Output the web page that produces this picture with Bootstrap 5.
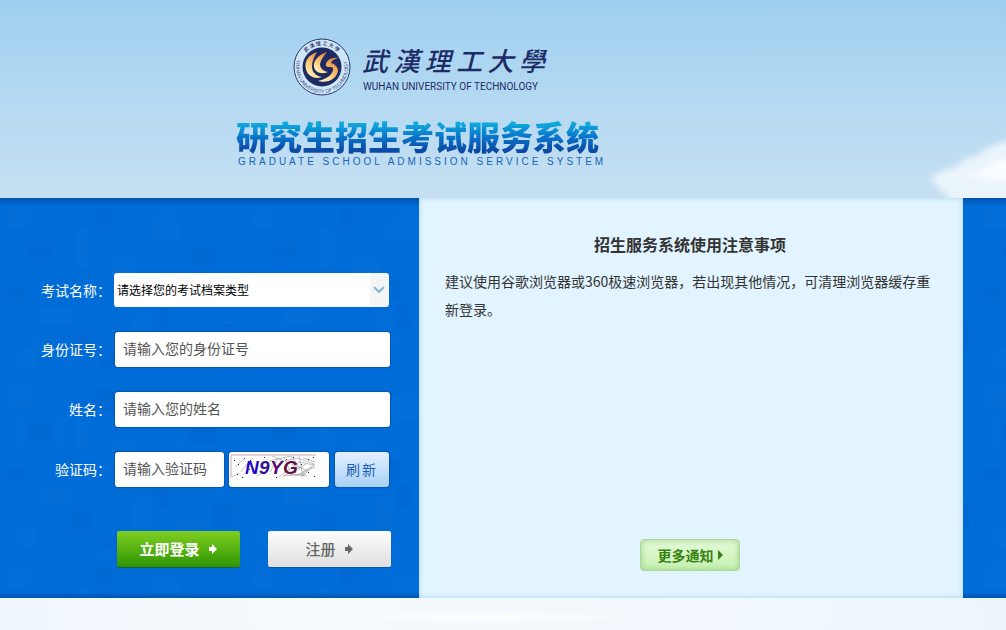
<!DOCTYPE html>
<html lang="zh-CN">
<head>
<meta charset="utf-8">
<meta name="viewport" content="width=device-width, initial-scale=1">
<title>研究生招生考试服务系统</title>
<link href="https://cdn.jsdelivr.net/npm/bootstrap@5.3.0/dist/css/bootstrap.min.css" rel="stylesheet">
<style>
body{font-family:"Noto Sans CJK SC",sans-serif;font-size:14px;background:#f1f7fd;color:#333}
.sky{background:linear-gradient(#9fcfef,#b4d9f2 50%,#c6e0f2);padding:37px 0 30px 236px;overflow:hidden}
.cloud{right:0;bottom:0;width:86px;height:70px}
.brand{padding-left:57px;gap:11px}
.brand-name{color:#1d2b66;width:183px;padding-top:4px}
.brand-cn{font-size:26px;line-height:34px;font-weight:500;font-style:italic}
.brand-en{font-family:Roboto,"Liberation Sans",sans-serif;font-size:10px;line-height:16px;margin-top:2px;white-space:nowrap;padding-left:1px}
.sys-title{font-size:33px;line-height:40px;font-weight:900;margin-top:19px;width:367px;
  background:linear-gradient(#10a8dc 20%,#0a78cc 50%,#0b4ba6 85%);-webkit-background-clip:text;background-clip:text;color:transparent}
.sys-title span{display:block}
.sys-sub{font-family:"Liberation Sans",sans-serif;font-size:10px;line-height:12px;letter-spacing:3px;color:#1765b8;white-space:nowrap;padding-left:2px}
.band{min-height:400px;background-color:#006cd7;background-image:
  linear-gradient(rgba(0,50,120,.45),transparent 8px),linear-gradient(0deg,rgba(0,50,120,.4),transparent 6px),
  url("data:image/svg+xml,%3Csvg xmlns='http://www.w3.org/2000/svg' width='244' height='180'%3E%3Cg fill='%23fff' fill-opacity='.012'%3E%3Cpath d='M8 12h22v18H8zM76 30h14v40H76zM110 64h26v12h-26zM150 20h30v22h-30zM200 80h20v26h-20zM40 110h34v16H40zM132 120h18v30h-18zM176 142h30v12h-30zM18 150h18v20H18z'/%3E%3C/g%3E%3Cg fill='%23003' fill-opacity='.022'%3E%3Cpath d='M28 44h24v20H28zM96 10h18v22H96zM128 82h30v20h-30zM188 50h28v16h-28zM70 132h22v24H70zM2 90h22v14H2zM154 106h14v24h-14zM212 126h26v24h-26zM100 160h34v10h-34z'/%3E%3C/g%3E%3C/svg%3E")}
.login{flex:0 0 419px;padding:76px 29px 30px 0}
.login label{flex:0 0 111px;text-align:right;color:#fff;margin-right:4px}
.rows{gap:25px}
.field{border:0;border-radius:3px;height:35px;font-size:14px;padding:0 8px 3px;color:#555;background-color:#fff;box-shadow:0 0 1px 1px #0058b4}
.field::placeholder{color:#555;opacity:1}
.exam{height:34px;margin:-1px 1px 0 -1px;font-size:12px;color:#000;padding:0 24px 0 3px;appearance:none;box-shadow:none;
  background:url("data:image/svg+xml,%3Csvg xmlns='http://www.w3.org/2000/svg' width='19' height='34'%3E%3Cpath fill='%23f4f5f6' d='M0 0h19v34H0z'/%3E%3Cpath d='M4 14l5 5 5-5' fill='none' stroke='%2384b5da' stroke-width='2'/%3E%3C/svg%3E") no-repeat right center #fff}
.code{width:109px}
.captcha{width:100px;height:35px;border-radius:3px;background:#fff;margin:0 6px 0 5px;box-shadow:0 0 1px 1px #0058b4}
.refresh{width:54px;height:35px;border:0;border-radius:3px;font-size:14px;color:#1c5fb0;padding:0;letter-spacing:2px;background:linear-gradient(#e2f0fd,#a9d1f6);box-shadow:0 0 1px 1px #0058b4}
.actions{padding-left:117px;gap:28px;margin:44px -1px 0 0}
.act{flex:1 1 0;height:36px;border:0;border-radius:2px;font-size:15px;font-weight:700;padding:0;gap:8px}
.act-login{color:#fff;background:linear-gradient(#80cf20,#2f9505);box-shadow:0 1px 1px #14604a}
.act-reg{color:#666;font-weight:500;background:linear-gradient(#fdfdfd,#dfdfe1);box-shadow:0 1px 1px #0058b4}
.notice{background:#e1f4ff;margin-right:43px;padding:32px 28px 27px 26px;box-shadow:inset 0 0 5px #a9d3ef;min-width:0}
.notice h1{font-size:16px;line-height:28px;font-weight:700;margin-bottom:9px}
.notice p{line-height:28px}
.more{width:100px;height:32px;font-size:14px;font-weight:700;color:#388210;border-radius:4px;border:1px solid #acd79b;background:linear-gradient(#e5f9d9,#c6f2b1);box-shadow:inset 0 0 6px #9ad184;gap:4px}
.foot{min-height:32px;background:radial-gradient(ellipse at 48% 60%,#fcfeff,rgba(252,254,255,0) 24%),linear-gradient(90deg,#eff6fc,#f6fafd 30%,#edf5fc)}
</style>
</head>
<body class="d-flex flex-column min-vh-100">
<header class="sky position-relative">
  <svg class="cloud position-absolute" viewBox="0 0 86 70" aria-hidden="true">
    <defs><filter id="soft" x="-30%" y="-30%" width="160%" height="160%"><feGaussianBlur stdDeviation="3"/></filter></defs>
    <path d="M10 50q14-9 28-12 8-10 18-10 12-10 22-12l20-8v70H40q-20-14-30-28z" fill="#eaf4fb" filter="url(#soft)"/>
    <path d="M45 49l18-7 12-8 20-6v25z" fill="#fafdff" filter="url(#soft)"/>
  </svg>
  <div class="brand d-flex align-items-center">
    <svg width="58" height="60" viewBox="-29 -30 58 60" role="img" aria-label="校徽">
      <defs>
        <linearGradient id="fl" x1="0" y1="1" x2=".6" y2="0"><stop stop-color="#fffbe0"/><stop offset=".4" stop-color="#ffd98a"/><stop offset="1" stop-color="#e98a3c"/></linearGradient>
        <path id="lower" d="M-25 -7A26 26 0 1 0 25 -7"/>
        <path id="upper" d="M-18 -12A21.500 21.500 0 0 1 18 -12"/>
      </defs>
      <circle r="28" fill="#cfe6f6" stroke="#26376f"/>
      <circle r="19.500" fill="#1d2b62"/>
      <text font-family="Liberation Sans" font-size="5" fill="#34457d"><textPath href="#lower">WUHAN UNIVERSITY OF TECHNOLOGY</textPath></text>
      <text font-size="5" font-weight="500" fill="#1d2b62"><textPath href="#upper" startOffset="3">武 漢 理 工 大 學</textPath></text>
      <path d="M-5 -15C-14 -12-18 -5-16 2C-15 8-8 13 0 10C-6 9-10 5-10 0C-10-6-8-10-5-15Z" fill="url(#fl)"/>
      <path d="M5 -15C-4 -12-9-6-8 0C-7 5-1 8 6 5C1 4-2 1-2-3C-1-8 2-11 5-15Z" fill="url(#fl)"/>
      <path d="M16 -9C8 -10 3 -5 4 -1C6 1 10 -1 11 1C12 6 6 12 -4 14C6 17 15 11 16 4C16 0 13 -3 9 -4C10 -7 13 -8 16 -9Z" fill="url(#fl)"/>
    </svg>
    <div class="brand-name">
      <div class="brand-cn d-flex justify-content-between"><span>武</span><span>漢</span><span>理</span><span>工</span><span>大</span><span>學</span></div>
      <div class="brand-en">WUHAN UNIVERSITY OF TECHNOLOGY</div>
    </div>
  </div>
  <div class="sys-title">研究生招生考试服务系统</div>
  <div class="sys-sub">GRADUATE SCHOOL ADMISSION SERVICE SYSTEM</div>
</header>

<main class="band d-flex">
  <form class="login" onsubmit="return false">
    <div class="rows d-flex flex-column">
      <div class="d-flex align-items-center">
        <label for="exam">考试名称：</label>
        <select id="exam" class="field exam flex-grow-1"><option>请选择您的考试档案类型</option></select>
      </div>
      <div class="d-flex align-items-center">
        <label for="idno">身份证号：</label>
        <input id="idno" class="field flex-grow-1" type="text" placeholder="请输入您的身份证号">
      </div>
      <div class="d-flex align-items-center">
        <label for="realname">姓名：</label>
        <input id="realname" class="field flex-grow-1" type="text" placeholder="请输入您的姓名">
      </div>
      <div class="d-flex align-items-center">
        <label for="code">验证码：</label>
        <input id="code" class="field code" type="text" placeholder="请输入验证码">
        <svg class="captcha" viewBox="0 0 100 35" role="img" aria-label="验证码">
          <path d="M2 26V3H87" fill="none" stroke="#c9a9b4"/>
          <g fill="none" stroke="#a9a3a9" stroke-width=".7"><path d="M3 25l7-4M7 14l9-8M12 20l7-9M24 6l-7 8M43 4l12 5 13-3 17 6M40 9l22-5 9 12-17 8 22-2M50 25l20-15 15 3-14 9M55 5l7 16 15-9M70 4l4 20 12-12M60 22l18 2M66 24l20-9M41 20l8-14M74 6l12 4M28 24l7-4M62 12l16 6-6 7"/></g>
          <path d="M5 8h1v1h-1zM9 12h1v1h-1zM15 6h1v1h-1zM8 22h1v1h-1zM20 17h1v1h-1zM21 8h1v1h-1zM35 5h1v1h-1zM57 7h1v1h-1zM47 25h1v1h-1zM72 12h1v1h-1zM79 7h1v1h-1zM84 5h1v1h-1zM85 24h1v1h-1zM79 20h1v1h-1zM13 25h1v1h-1zM64 5h1v1h-1z" fill="#223"/>
          <text y="22" font-family="Liberation Sans" font-size="19" font-weight="700" font-style="italic"><tspan x="16" fill="#2608c4">N</tspan><tspan x="30" fill="#321093">9</tspan><tspan x="41" fill="#5c0a71">Y</tspan><tspan x="54" fill="#650d42">G</tspan></text>
        </svg>
        <button class="refresh" type="button">刷新</button>
      </div>
    </div>
    <div class="actions d-flex">
      <button class="act act-login d-flex align-items-center justify-content-center" type="submit">立即登录<svg width="10" height="10" viewBox="0 0 10 10" fill="currentColor" aria-hidden="true"><path d="M1 3h3V0l5 5-5 5V7H1z"/></svg></button>
      <button class="act act-reg d-flex align-items-center justify-content-center" type="button">注册<svg width="10" height="10" viewBox="0 0 10 10" fill="currentColor" aria-hidden="true"><path d="M1 3h3V0l5 5-5 5V7H1z"/></svg></button>
    </div>
  </form>
  <section class="notice flex-grow-1 d-flex flex-column">
    <h1 class="text-center">招生服务系统使用注意事项</h1>
    <p>建议使用谷歌浏览器或360极速浏览器，若出现其他情况，可清理浏览器缓存重新登录。</p>
    <a class="more mt-auto mx-auto d-flex align-items-center justify-content-center text-decoration-none" href="#">更多通知<svg width="5" height="10" viewBox="0 0 5 10" fill="currentColor" aria-hidden="true"><path d="M0 0l5 5-5 5z"/></svg></a>
  </section>
</main>
<footer class="foot flex-grow-1"></footer>
<script src="https://cdn.jsdelivr.net/npm/bootstrap@5.3.0/dist/js/bootstrap.bundle.min.js"></script>
</body>
</html>
